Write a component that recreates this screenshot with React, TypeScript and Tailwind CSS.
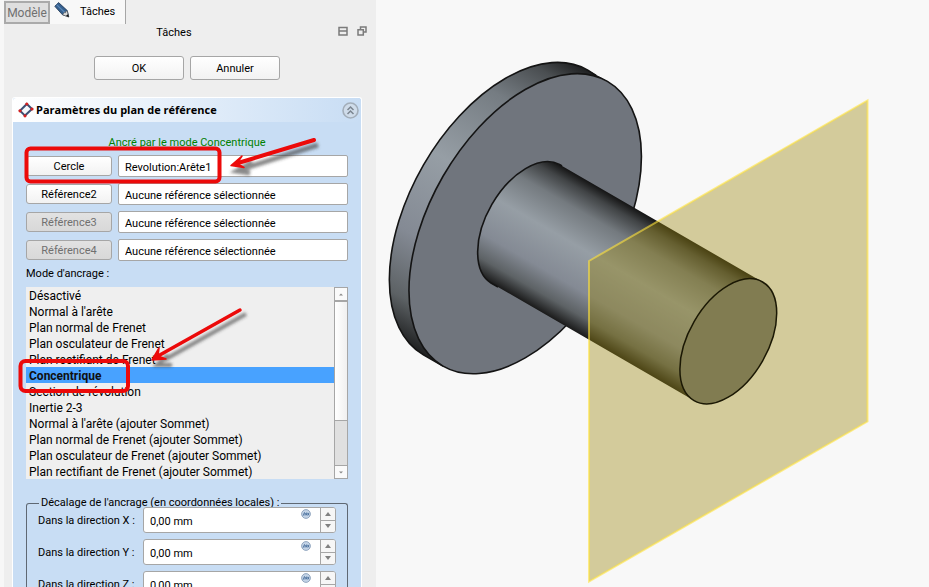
import { useState } from 'react';

interface Reference {
  id: string;
  button: string;
  value: string;
  disabled?: boolean;
}

const references: Reference[] = [
  { id: 'ref1', button: 'Cercle', value: 'Revolution:Arête1' },
  { id: 'ref2', button: 'Référence2', value: 'Aucune référence sélectionnée' },
  { id: 'ref3', button: 'Référence3', value: 'Aucune référence sélectionnée', disabled: true },
  { id: 'ref4', button: 'Référence4', value: 'Aucune référence sélectionnée', disabled: true },
];

const modes = [
  'Désactivé',
  "Normal à l'arête",
  'Plan normal de Frenet',
  'Plan osculateur de Frenet',
  'Plan rectifiant de Frenet',
  'Concentrique',
  'Section de révolution',
  'Inertie 2-3',
  "Normal à l'arête (ajouter Sommet)",
  'Plan normal de Frenet (ajouter Sommet)',
  'Plan osculateur de Frenet (ajouter Sommet)',
  'Plan rectifiant de Frenet (ajouter Sommet)',
];

const axes = ['X', 'Y', 'Z'];

function PencilIcon() {
  return (
    <svg width="16" height="16" viewBox="0 0 16 16" aria-hidden="true">
      <path d="M0.800 4.300 4.600 0.600 13.300 8.600 14.800 14.800 8.500 12.800Z" fill="#35608f" stroke="#1d3450" strokeWidth="0.8" />
      <path d="M2.6 2.6 11 10.8" stroke="#5c89b8" strokeWidth="1.2" />
      <path d="M8.800 12.800 10 10.6 11.6 10.8 11.8 9.2 13.200 9 14.5 15Z" fill="#dcdcdc" stroke="#444" strokeWidth="0.5" />
      <path d="M12 13.800 14 12.200 14.8 15.3Z" fill="#111" />
    </svg>
  );
}

function PlaneIcon() {
  return (
    <svg width="16" height="16" viewBox="0 0 16 16" aria-hidden="true">
      <path d="M2 8.8 8.8 2 14 7 7 13.6Z" fill="#f4f7fb" stroke="#3d4f73" strokeWidth="2" />
      <circle cx="2" cy="8.8" r="1.6" fill="#d42020" />
      <circle cx="8.8" cy="2" r="1.6" fill="#d42020" />
      <circle cx="14" cy="7" r="1.6" fill="#d42020" />
      <circle cx="7" cy="13.8" r="1.6" fill="#d42020" />
    </svg>
  );
}

function CollapseIcon() {
  return (
    <svg width="17" height="17" viewBox="0 0 17 17" fill="none" aria-hidden="true">
      <circle cx="8.5" cy="8.5" r="7.5" fill="#cfdcea" stroke="#a3aeba" strokeWidth="1.6" />
      <path d="m5.5 8 3-3 3 3M5.5 12l3-3 3 3" stroke="#7b8590" strokeWidth="1.5" />
    </svg>
  );
}

function FormulaIcon() {
  return (
    <svg width="10" height="10" viewBox="0 0 10 10" fill="none" aria-hidden="true">
      <circle cx="5" cy="5" r="4.4" fill="#c3d3e6" stroke="#8ba0bb" strokeWidth="0.9" />
      <path d="M2 6.8 3.6 3.2M4 6.6V4.2l1.6 2V3.6M6.4 3.8 8 6.4M8 3.8 6.6 6.4" stroke="#3f6797" strokeWidth="0.8" />
    </svg>
  );
}

function ScrollBar() {
  return (
    <div className="flex w-[14px] flex-col border-x border-t border-[#a6a6a6] bg-[#e0e0e0]" aria-hidden="true">
      <div className="flex h-[14px] items-center justify-center border-b-2 border-[#a6a6a6] bg-[#fafafa]">
        <svg width="4" height="3" viewBox="0 0 4 3"><path d="M0 2.5 2 0.5 4 2.5Z" fill="#888" /></svg>
      </div>
      <div className="h-[119px] border-b border-[#a6a6a6] bg-linear-to-r from-white to-[#f0f0f0]" />
      <div className="flex-1" />
      <div className="flex h-[14px] items-center justify-center border-y border-[#a6a6a6] bg-[#fafafa]">
        <svg width="4" height="3" viewBox="0 0 4 3"><path d="M0 0.5 2 2.5 4 0.5Z" fill="#888" /></svg>
      </div>
    </div>
  );
}

function SpinBox({ axis }: { axis: string }) {
  const id = `offset-${axis}`;
  return (
    <div className="flex items-center">
      <label htmlFor={id} className="w-[105px] pt-[2px] whitespace-nowrap">
        Dans la direction {axis} :
      </label>
      <div className="flex h-[26px] flex-1 overflow-hidden rounded-[3px] border border-[#a6a6a6] bg-white">
        <input id={id} defaultValue="0,00 mm" className="min-w-0 flex-1 bg-transparent pt-1 pl-[6px] outline-none" />
        <div className="mr-[9px] pt-[1px]">
          <FormulaIcon />
        </div>
        <div className="flex w-[15px] flex-col border-l border-[#a6a6a6] bg-[#f6f6f6]">
          <button aria-label={`Augmenter ${axis}`} className="flex flex-1 items-center justify-center border-b border-[#a6a6a6]">
            <svg width="6" height="4" viewBox="0 0 6 4"><path d="M0 4 3 0 6 4Z" fill="#808080" /></svg>
          </button>
          <button aria-label={`Diminuer ${axis}`} className="flex flex-1 items-center justify-center">
            <svg width="6" height="4" viewBox="0 0 6 4"><path d="M0 0 3 4 6 0Z" fill="#808080" /></svg>
          </button>
        </div>
      </div>
    </div>
  );
}

function Annotations() {
  return (
    <svg className="pointer-events-none absolute top-0 left-0" width="372" height="587" viewBox="4 0 372 587" fill="none" aria-hidden="true">
      <defs>
        <filter id="soft" x="-20%" y="-20%" width="140%" height="140%">
          <feGaussianBlur stdDeviation="1.8" />
        </filter>
      </defs>
      <g stroke="#3c3c3c" strokeOpacity="0.6" filter="url(#soft)">
        <path d="M318 145 242 169M252 162 237 171 250 173" strokeWidth="5" />
        <path d="M246 314 164 360M168 355 157 365 172 365" strokeWidth="4" />
      </g>
      <g stroke="#ec0a0a" fill="#ec0a0a">
        <path d="M314 140 238 163" strokeWidth="4" strokeLinecap="round" />
        <path d="M242 156 231 165.500 244 167.500 237 163.500Z" strokeWidth="1.500" strokeLinejoin="round" />
        <path d="M240 310 158 356" strokeWidth="3.500" strokeLinecap="round" />
        <path d="M159 348 152 360 166 359 158 356Z" strokeWidth="1.500" strokeLinejoin="round" />
      </g>
      <g stroke="#ec0a0a" strokeWidth="4">
        <rect x="26.500" y="148.500" width="193" height="33" rx="4" />
        <rect x="20.500" y="361" width="107.500" height="30" rx="5" />
      </g>
    </svg>
  );
}

function TaskPanel() {
  const [mode, setMode] = useState('Concentrique');

  return (
    <aside className="relative w-[376px] shrink-0 overflow-hidden border-l-4 border-[#f7f7f7] bg-[#eeeeee]">
      <div className="flex h-6" role="tablist">
        <button role="tab" aria-selected="false" className="mt-[1px] w-[46px] border-2 border-[#aaaaaa] bg-[#dfdfdf] pt-[1px] text-[12px] text-[#707070]">
          Modèle
        </button>
        <button role="tab" aria-selected="true" className="flex w-[76px] gap-[10px] border-r border-[#a6a6a6] bg-[#f8f8f8] pt-[2px] pl-1 leading-5">
          <PencilIcon />
          Tâches
        </button>
      </div>

      <div className="relative h-[14px] pt-[1px] pr-[32px] text-center">
        <h1>Tâches</h1>
        <div className="absolute top-[2px] right-[9px] flex gap-[9px]">
          <button aria-label="Réduire">
            <svg width="10" height="10" viewBox="0 0 10 10" fill="none" stroke="#7b7b7b"><path d="M1 1.500H9V9H1ZM1 5H9" strokeWidth="1.500" /></svg>
          </button>
          <button aria-label="Détacher">
            <svg width="10" height="10" viewBox="0 0 10 10" fill="none" stroke="#7b7b7b"><path d="M3.500 3.500V1H9V6H6.500M1 3.700H6.300V9H1Z" strokeWidth="1.500" /></svg>
          </button>
        </div>
      </div>

      <div className="mt-[18px] flex justify-center gap-[6px] pr-[6px]">
        <button className="h-6 w-[90px] rounded-[3px] border border-[#a6a6a6] bg-linear-to-b from-white to-[#f2f2f2] pt-[2px]">OK</button>
        <button className="h-6 w-[90px] rounded-[3px] border border-[#a6a6a6] bg-linear-to-b from-white to-[#f2f2f2] pt-[2px]">Annuler</button>
      </div>

      <section className="mt-[17px] mr-[14px] ml-2 rounded-t-[3px] border border-b-0 border-white bg-[#c8ddf4]">
        <header className="flex h-6 items-center rounded-t-[3px] bg-linear-to-r from-white to-[#c8ddf4] pr-[2px] pl-[5px]">
          <PlaneIcon />
          <h2 className="ml-[2px] flex-1 font-['Open_Sans'] font-bold">Paramètres du plan de référence</h2>
          <button aria-label="Replier">
            <CollapseIcon />
          </button>
        </header>

        <div className="px-[13px] pt-[13px]">
          <p className="text-center text-[#008000]">Ancré par le mode Concentrique</p>

          <div className="mt-1 flex flex-col gap-[6px]">
            {references.map((ref) => (
              <div key={ref.id} className="flex items-center gap-[6px]">
                <button
                  id={ref.id}
                  disabled={ref.disabled}
                  className="h-5 w-[86px] rounded-[3px] border border-[#a6a6a6] bg-linear-to-b from-white to-[#f2f2f2] pt-[2px] disabled:from-[#e2e2e2] disabled:to-[#d8d8d8] disabled:text-[#707070]"
                >
                  {ref.button}
                </button>
                <input
                  aria-labelledby={ref.id}
                  readOnly
                  defaultValue={ref.value}
                  className="h-[22px] min-w-0 flex-1 rounded-[2px] border border-[#a6a6a6] bg-white px-[6px] pt-[2px] outline-none"
                />
              </div>
            ))}
          </div>

          <label htmlFor="mode" className="mt-1 block pb-1 leading-[18px]">
            Mode d'ancrage :
          </label>
          <div className="flex h-48 bg-[#efefef]">
            <select
              id="mode"
              size={12}
              value={mode}
              onChange={(e) => setMode(e.target.value)}
              className="h-48 min-w-0 flex-1 appearance-none overflow-hidden bg-[#efefef] p-0 text-[12px] outline-none"
            >
              {modes.map((m) => (
                <option
                  key={m}
                  value={m}
                  className="h-4 min-h-4 p-0 pt-[2px] pl-[3px] leading-[14px] checked:bg-[linear-gradient(#48a2ff,#48a2ff)] checked:font-bold"
                >
                  {m}
                </option>
              ))}
            </select>
            <ScrollBar />
          </div>

          <fieldset className="mt-4 rounded-t-[3px] border border-b-0 border-[#5f6873] px-[11px] pb-3">
            <legend className="ml-[1px] px-[2px]">Décalage de l'ancrage (en coordonnées locales) :</legend>
            <div className="-mt-1 flex flex-col gap-[6px]">
              {axes.map((axis) => (
                <SpinBox key={axis} axis={axis} />
              ))}
            </div>
          </fieldset>
        </div>
      </section>

      <Annotations />
    </aside>
  );
}

function Viewport() {
  return (
    <main className="min-w-0 flex-1">
      <svg className="h-full w-full" viewBox="376 0 553 587" role="img" aria-label="Vue 3D">
        <defs>
          <linearGradient id="rim" gradientUnits="userSpaceOnUse" x1="587.8" y1="70" x2="423.4" y2="355">
            <stop offset="0" stopColor="#1e1f20" />
            <stop offset="0.07" stopColor="#4a4e51" />
            <stop offset="0.2" stopColor="#757c82" />
            <stop offset="0.45" stopColor="#969ea5" />
            <stop offset="0.7" stopColor="#848a94" />
            <stop offset="0.88" stopColor="#5d6265" />
            <stop offset="1" stopColor="#1e1f20" />
          </linearGradient>
          <linearGradient id="shaft" gradientUnits="userSpaceOnUse" x1="559.5" y1="164.4" x2="491" y2="283">
            <stop offset="0" stopColor="#141414" />
            <stop offset="0.08" stopColor="#414446" />
            <stop offset="0.22" stopColor="#747a7f" />
            <stop offset="0.45" stopColor="#969ea5" />
            <stop offset="0.72" stopColor="#848a94" />
            <stop offset="0.88" stopColor="#5d6265" />
            <stop offset="1" stopColor="#1a1a1a" />
          </linearGradient>
        </defs>

        {/* flange: rim, then front face */}
        <path
          d="M423.400 354.900A94.9 164.4 30 0 1 587.800 70.100L607.400 81.300 443 366.100Z"
          fill="url(#rim)"
        />
        <path
          d="M443 366.100 423.400 354.900A94.9 164.4 30 0 1 587.800 70.100L596 75.500"
          fill="none"
          stroke="#141414"
          strokeWidth="1.600"
        />
        <ellipse cx="525.2" cy="223.700" rx="94.9" ry="164.4" transform="rotate(30 525.2 223.7)" fill="#70757d" stroke="#141414" strokeWidth="1.6" />

        {/* shaft */}
        <path d="M491 283A39.500 68.500 30 0 1 559.500 164.400L762.500 282 694 400.600Z" fill="url(#shaft)" />
        <path d="M498 287 491 283A39.500 68.500 30 0 1 559.500 164.400L562 166" fill="none" stroke="#141414" strokeWidth="1.600" />
        <ellipse cx="728.3" cy="341.3" rx="39.5" ry="68.5" transform="rotate(30 728.3 341.3)" fill="#70757d" />

        {/* reference plane */}
        <path d="M589 261 867.500 100.500V421.500L589 581.500Z" fill="#9a8610" fillOpacity="0.4" />
        <path d="M589 261 867.500 100.500V421.500L589 581.500Z" fill="none" stroke="#ffe23c" strokeOpacity="0.6" strokeWidth="2" />
        <ellipse cx="728.3" cy="341.3" rx="39.5" ry="68.5" transform="rotate(30 728.3 341.3)" fill="none" stroke="#1b1804" strokeWidth="1.500" />
      </svg>
    </main>
  );
}

export default function App() {
  return (
    <div className="flex h-screen overflow-hidden bg-[#f8f8f8] font-['Roboto','Noto_Sans',sans-serif] text-[11px] leading-4 text-black">
      <TaskPanel />
      <Viewport />
    </div>
  );
}
